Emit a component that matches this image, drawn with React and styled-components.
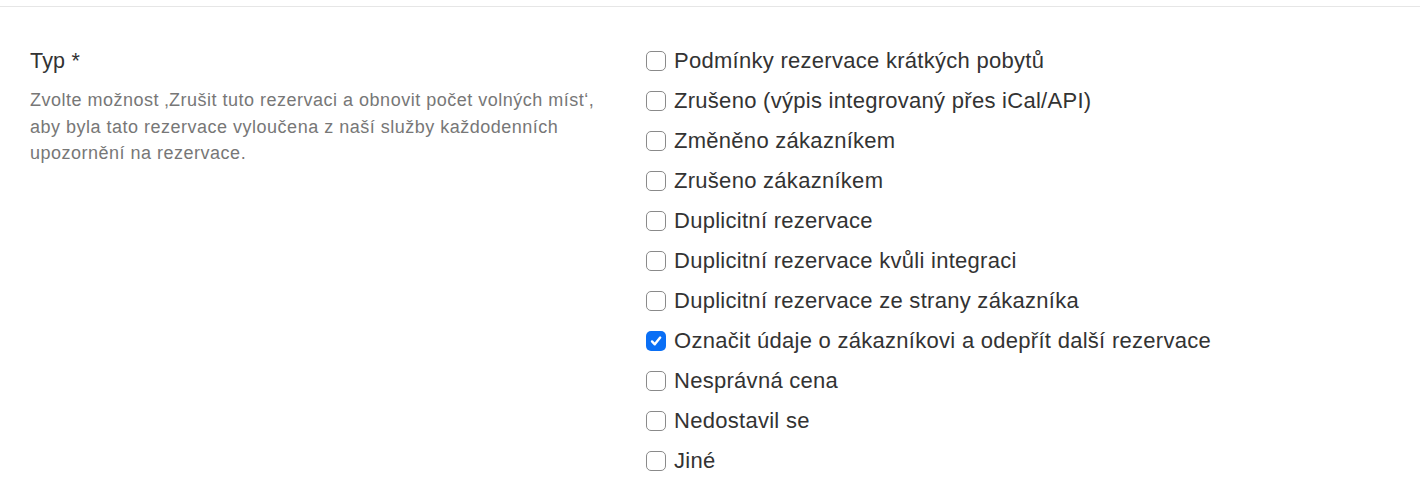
import React from "react";
import styled, { createGlobalStyle } from "styled-components";

const Global = createGlobalStyle`
  html, body { margin: 0; padding: 0; background: #fff; }
  body { font-family: "Liberation Sans", Arial, Helvetica, sans-serif; color: #333; }
`;

const Page = styled.div`
  font-family: "Liberation Sans", Arial, Helvetica, sans-serif;
  border-top: 1px solid #e6e6e6;
  margin-top: 6px;
  padding: 32px 30px 0 30px;
  display: grid;
  grid-template-columns: 616px 1fr;
`;

const Left = styled.div`
  display: flex;
  flex-direction: column;
  padding-top: 10px;
`;

const Label = styled.div`
  font-size: 21.5px;
  line-height: 24px;
  letter-spacing: 0.2px;
  color: #333;
  margin-bottom: 14px;
`;

const Help = styled.p`
  margin: 0;
  font-size: 18px;
  line-height: 26.5px;
  letter-spacing: 0.5px;
  color: #777;
  width: 596px;
`;

const List = styled.div`
  display: flex;
  flex-direction: column;
  padding-top: 2px;
`;

const Row = styled.label`
  display: flex;
  align-items: center;
  height: 40px;
  gap: 8px;
  font-size: 22px;
  letter-spacing: 0.28px;
  color: #333;
  cursor: pointer;
`;

const Box = styled.span`
  width: 20px;
  height: 20px;
  box-sizing: border-box;
  border-radius: 5px;
  border: ${(p) => (p.$checked ? "none" : "1.5px solid #8a8a8a")};
  background: ${(p) => (p.$checked ? "#0a6ff5" : "#fff")};
  display: flex;
  align-items: center;
  justify-content: center;
  flex-shrink: 0;
`;

const items = [
  "Podmínky rezervace krátkých pobytů",
  "Zrušeno (výpis integrovaný přes iCal/API)",
  "Změněno zákazníkem",
  "Zrušeno zákazníkem",
  "Duplicitní rezervace",
  "Duplicitní rezervace kvůli integraci",
  "Duplicitní rezervace ze strany zákazníka",
  "Označit údaje o zákazníkovi a odepřít další rezervace",
  "Nesprávná cena",
  "Nedostavil se",
  "Jiné",
];

export default function App() {
  return (
    <>
      <Global />
      <Page>
        <Left>
          <Label>Typ *</Label>
          <Help>
            Zvolte možnost ‚Zrušit tuto rezervaci a obnovit počet volných míst‘,
            aby byla tato rezervace vyloučena z naší služby každodenních
            upozornění na rezervace.
          </Help>
        </Left>
        <List>
          {items.map((t, i) => {
            const checked = i === 7;
            return (
              <Row key={t}>
                <Box $checked={checked}>
                  {checked && (
                    <svg width="14" height="14" viewBox="0 0 14 14">
                      <path
                        d="M3 7.4 L5.8 10.3 L11.2 3.6"
                        fill="none"
                        stroke="#fff"
                        strokeWidth="2.4"
                        strokeLinecap="round"
                        strokeLinejoin="round"
                      />
                    </svg>
                  )}
                </Box>
                {t}
              </Row>
            );
          })}
        </List>
      </Page>
    </>
  );
}
